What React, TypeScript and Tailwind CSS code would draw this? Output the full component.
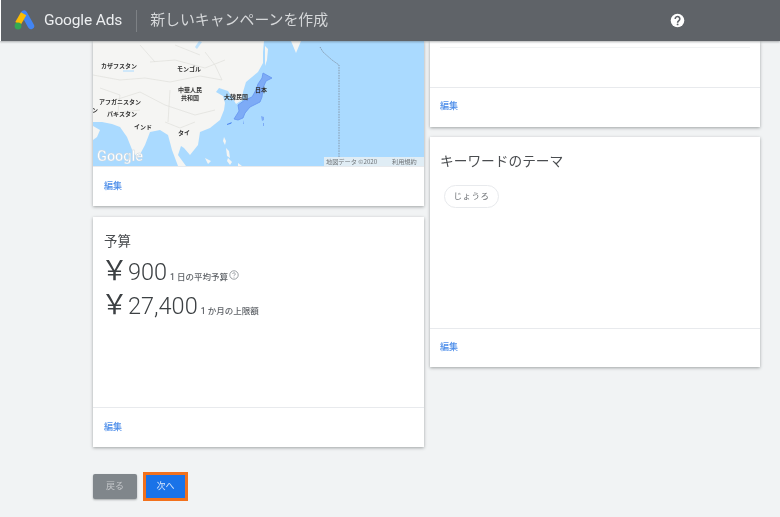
import React from "react";

const CJK = "font-['Roboto','Noto_Sans_CJK_JP',sans-serif]";

function AdsLogo() {
  return (
    <svg width="22" height="21" viewBox="0 0 22 21" className="shrink-0">
      <path d="M11 3.5 L18 16" stroke="#4285f4" strokeWidth="6.4" strokeLinecap="round" fill="none" />
      <path d="M10.6 3.8 L5 13.5" stroke="#fbbc04" strokeWidth="6.2" strokeLinecap="butt" fill="none" />
      <circle cx="5" cy="16" r="3.4" fill="#34a853" />
    </svg>
  );
}

function HelpIcon() {
  return (
    <svg width="15" height="15" viewBox="0 0 15 15">
      <circle cx="7.5" cy="7.5" r="6.8" fill="#fff" />
      <path d="M5.2 5.9a2.3 2.3 0 1 1 3.7 1.8c-.8.6-1.3 1-1.3 2" stroke="#5f6368" strokeWidth="1.6" fill="none" />
      <circle cx="7.6" cy="11.4" r="0.95" fill="#5f6368" />
    </svg>
  );
}

function MapDrawing() {
  const label = { fontSize: 6, fill: "#333", fontWeight: 700, textAnchor: "middle" as const, fontFamily: "'Noto Sans CJK JP',sans-serif" };
  const border = { stroke: "#dfdfdb", strokeWidth: 0.7, fill: "none" };
  return (
    <svg viewBox="93 41 331 125" width="331" height="125" className="block">
      <rect x="93" y="41" width="331" height="125" fill="#aadaff" />
      <path
        d="M93 41H264L263 52L263 63L258 72L246 82L243 92L242 100L236 104L232 97L228 91L219 88L216 92L223 96L225 103L224 110L220 120L210 128L200 132L198 145L190 155L184 148L181 146L178 155L186 166L178 166L172 150L168 135L160 130L150 132L145 145L138 158L133 152L127 137L120 127L112 124L102 122L93 122Z"
        fill="#f5f5f3"
      />
      <path d="M93 126L100 130L97 137L93 140Z" fill="#f5f5f3" />
      <path d="M291 41H301L296 53Z" fill="#f5f5f3" />
      <path d="M265 46L268 49L267 60L265 66Z" fill="#f5f5f3" />
      <path d="M199 41L202 42L197 49L195 47Z" fill="#aadaff" opacity="0.7" />
      <path d="M123 71h11" stroke="#aadaff" strokeWidth="1" />
      <path d="M93 75L120 80L145 78L170 82L200 76L222 80M150 62L175 60L205 68L225 60M115 100L140 92L165 105L195 115L215 110M115 113L140 110M165 122L180 128L195 122M205 52L215 65L222 80" {...border} />
      <path d="M140 45L155 62M175 45L200 55M100 88L120 95L118 112M170 90L168 122" {...border} />
      <path d="M224 137l2 4-1 4-2-4zM226 148l3 3 1 7-3-2zM228 158l4 4-2 3-3-4zM205 158l6 3-3 3zM238 163l4 3h-4z" fill="#f5f5f3" />
      <path
        d="M263 73L272 78L266 81L263 88L262 97L260 102L250 107L245 113L243 118L238 120L234 119L239 111L238 105L245 100L252 97L256 90L258 84L262 78Z"
        fill="#7dabf6"
        stroke="#6494f0"
        strokeWidth="0.8"
      />
      <path d="M227 124l5-2-1 1.800-4 1.200z" fill="#4f86ef" />
      <path d="M261 116l3 1v3l-2 1zM263 123h1v3h-1zM243 120l1 4-1 0z" fill="#7dabf6" />
      <path d="M320 47L323 52L332 60L339 65V166" stroke="#7d8a99" strokeWidth="0.8" strokeDasharray="1.6 1" fill="none" />
      <text x="119" y="68" {...label}>カザフスタン</text>
      <text x="189" y="71" {...label}>モンゴル</text>
      <text x="190" y="92" {...label}>中華人民</text>
      <text x="190" y="100" {...label}>共和国</text>
      <text x="236" y="99" {...label}>大韓民国</text>
      <text x="261" y="92" {...label}>日本</text>
      <text x="120" y="104" {...label}>アフガニスタン</text>
      <text x="95" y="112" {...label}>ン</text>
      <text x="122" y="116" {...label}>パキスタン</text>
      <text x="143" y="129" {...label}>インド</text>
      <text x="184" y="135" {...label}>タイ</text>
      <text x="97" y="161" fill="#fff" stroke="#c9d3da" strokeWidth="0.4" fontSize="14.5" fontWeight="500" fontFamily="Roboto,sans-serif">Google</text>
      <rect x="324" y="157" width="100" height="9" fill="#e6eef4" opacity="0.9" />
      <text x="326" y="163.5" fill="#6f7478" fontSize="6.2" fontFamily="'Noto Sans CJK JP',sans-serif">地図データ ©2020</text>
      <text x="392" y="163.5" fill="#6f7478" fontSize="6.2" fontFamily="'Noto Sans CJK JP',sans-serif">利用規約</text>
    </svg>
  );
}

function EditRow({ className = "h-10 px-[11px]" }: { className?: string }) {
  return (
    <div className={`flex shrink-0 items-center border-t border-[#e8eaed] ${className}`}>
      <span className="text-[9px] font-medium text-[#4f8fea]">編集</span>
    </div>
  );
}

const card = "flex flex-col bg-white shadow-[0_1px_3px_rgba(60,64,67,0.45)]";

function Amount({ value, note, help }: { value: string; note: string; help?: boolean }) {
  return (
    <div className="flex items-baseline text-[#3c4043]">
      <span className="ml-[-3px] w-[27px] text-[27px] leading-[28px] font-normal">￥</span>
      <span className="text-[23.5px] leading-[28px] font-light">{value}</span>
      <span className="ml-[3px] text-[8.5px] font-medium text-[#5f6368]">{note}</span>
      {help && (
        <svg width="10" height="10" viewBox="0 0 9 9" className="ml-[1px] translate-y-[3px] self-center">
          <circle cx="4.5" cy="4.5" r="3.8" fill="none" stroke="#80868b" strokeWidth="0.7" />
          <path d="M3.4 3.6a1.1 1.1 0 1 1 1.700.9c-.4.3-.6.5-.6 1M4.500 6.200v.6" fill="none" stroke="#80868b" strokeWidth="0.7" />
        </svg>
      )}
    </div>
  );
}

export default function App() {
  return (
    <div className={`${CJK} flex h-[517px] w-[780px] flex-col overflow-hidden bg-[#f1f3f4] blur-[0.7px]`}>
      <header className="relative z-10 flex h-[41px] shrink-0 items-center border-l border-white bg-[#5f6368] pl-[12px] shadow-[0_1px_2px_rgba(60,64,67,0.4)]">
        <AdsLogo />
        <span className="ml-[9px] font-['Roboto',sans-serif] text-[15.5px] tracking-[-0.15px] text-[#eceef0]">Google Ads</span>
        <div className="ml-[14px] h-[22px] w-px bg-[#7d8185]" />
        <h1 className="ml-[13px] text-[14.9px] font-normal text-[#d5d7d9]">新しいキャンペーンを作成</h1>
        <div className="ml-[342px] flex">
          <HelpIcon />
        </div>
      </header>

      <main className="flex items-start gap-[6px] pl-[93px]">
        <div className="flex w-[331px] flex-col">
          <section className={card}>
            <MapDrawing />
            <EditRow />
          </section>
          <section className={`${card} mt-[11px] h-[230px]`}>
            <div className="flex-1 px-[11px] pt-[15px]">
              <h2 className="text-[13.5px] leading-[19px] font-normal text-[#4a4d50]">予算</h2>
              <div className="mt-[6px] flex flex-col gap-[5px]">
                <Amount value="900" note="1 日の平均予算" help />
                <Amount value="27,400" note="1 か月の上限額" />
              </div>
            </div>
            <EditRow />
          </section>
          <div className="mt-[25px] flex items-center gap-[6px]">
            <button className="h-[25px] w-[44px] rounded-[2px] bg-[#80868b] text-[9px] text-[#c4c7ca] shadow-[0_1px_2px_rgba(60,64,67,0.4)]">戻る</button>
            <button className="h-[29px] w-[45px] border-[3.5px] border-[#f2711c] bg-[#1a73e8] text-[9px] text-[#d5e5fb]">次へ</button>
          </div>
        </div>

        <div className="flex w-[330px] flex-col">
          <section className={`${card} h-[86px]`}>
            <div className="flex-1">
              <div className="mx-[10px] mt-[6px] h-px bg-[#f1f3f4]" />
            </div>
            <EditRow className="h-10 px-[10px] pb-[2px]" />
          </section>
          <section className={`${card} mt-[10px] h-[230px]`}>
            <div className="flex-1 px-[10px] pt-[14px]">
              <h2 className="text-[13.7px] leading-[20px] font-normal text-[#4a4d50]">キーワードのテーマ</h2>
              <div className="mt-[14px] ml-[4px] flex h-[23px] w-[55px] items-center justify-center rounded-full border border-[#e8eaed] text-[8.5px] tracking-[0.5px] text-[#6b6f73]">じょうろ</div>
            </div>
            <EditRow className="h-[39px] px-[10px]" />
          </section>
        </div>
      </main>
    </div>
  );
}
